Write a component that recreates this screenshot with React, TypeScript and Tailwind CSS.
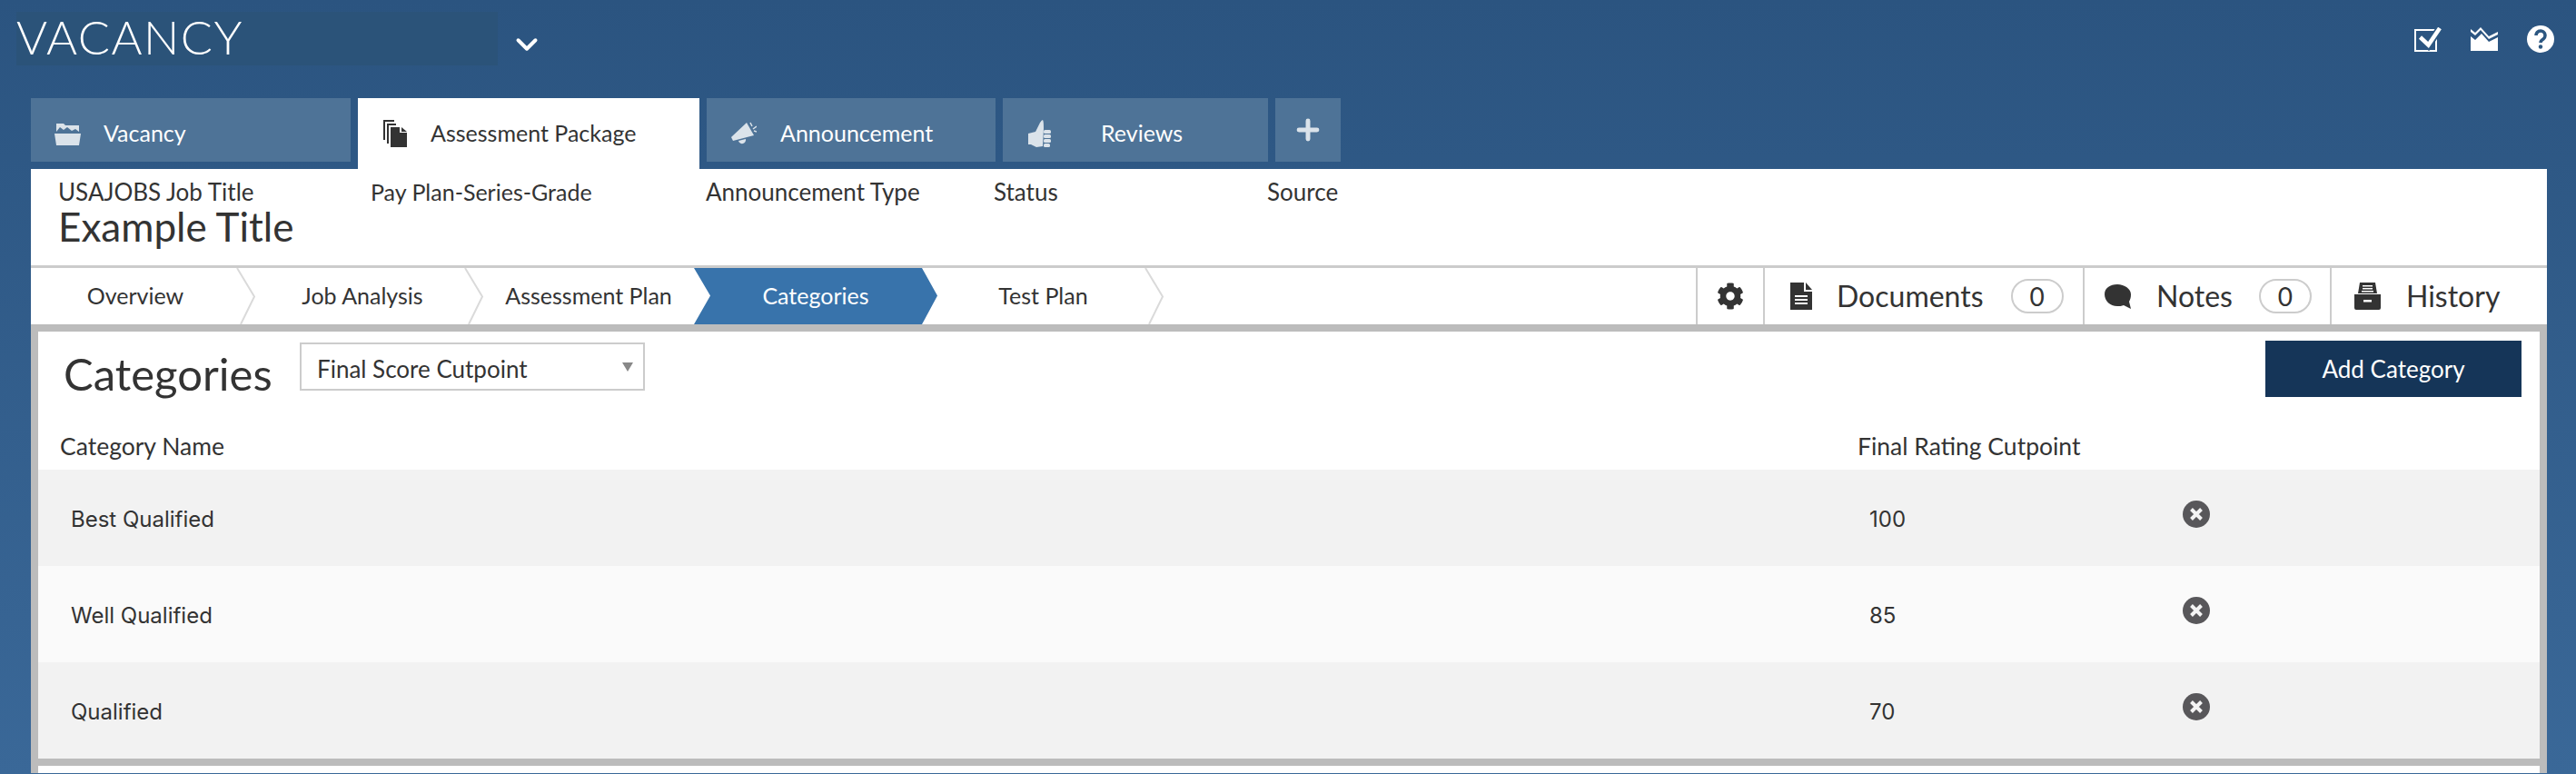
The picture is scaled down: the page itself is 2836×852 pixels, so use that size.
import React from 'react';
import { ChevronDown, Plus } from 'lucide-react';
import { FaCog } from 'react-icons/fa';

const ubuntu = { fontFamily: 'Lato' };

const FolderIcon = () => (
  <svg viewBox="0 0 29 25" className="w-[29px] h-[25px]" fill="currentColor">
    <path d="M2 1h8l2 2h15v7l-4-3-4 2-5-4-4 3-4-3-4 5z" />
    <path d="M0 12h29l-2 13H2z" />
  </svg>
);

const PagesIcon = () => (
  <svg viewBox="0 0 26 30" className="w-[26px] h-[30px]" fill="currentColor">
    <path d="M0 0h12v2H2v20H0z" />
    <path d="M4 4h10v2H6v20H4z" />
    <path d="M8 8h10v6h8v16H8z" />
    <path d="M20 8l6 5h-6z" />
  </svg>
);

const MegaphoneIcon = () => (
  <svg viewBox="0 0 28 27" className="w-[28px] h-[27px]" fill="currentColor">
    <path d="M0 17L17 1l8 14-23 6z" />
    <path d="M8 21l8-2a4 4 0 0 1-8 2z" />
    <path d="M21 1l2 4M24 8l4-3M25 10l3 1" stroke="currentColor" strokeWidth="1.500" />
  </svg>
);

const ThumbIcon = () => (
  <svg viewBox="0 0 25 30" className="w-[25px] h-[30px]" fill="currentColor">
    <path d="M0 15l8-2 5-10q2-3 3-3 1 1 1 9l-1 20-7 1-6-3H0z" />
    <rect x="17" y="11" width="8" height="4" rx="1.500" />
    <rect x="17" y="16" width="8" height="4" rx="1.500" />
    <rect x="17" y="21" width="8" height="4" rx="1.500" />
    <rect x="17" y="26" width="7" height="4" rx="1.500" />
  </svg>
);

const CheckBoxIcon = () => (
  <svg viewBox="0 0 30 27" className="w-[30px] h-[27px]" fill="none">
    <rect x="1" y="3" width="23" height="23" stroke="white" strokeWidth="2" />
    <path d="M6.500 11l9 9L28 1" stroke="#2c5781" strokeWidth="8" />
    <path d="M6.500 11l9 8.500L28 1" stroke="white" strokeWidth="4.500" />
  </svg>
);

const ChartIcon = () => (
  <svg viewBox="0 0 30 26" className="w-[30px] h-[26px]" fill="white">
    <path d="M0 2l5 4 6-6 9 10 10-5v3l-10 5-9-10-6 6-5-4z" />
    <path d="M0 10l5 4 7-7 8 9 10-5v15H0z" />
  </svg>
);

const HelpIcon = () => (
  <svg viewBox="0 0 30 30" className="w-[30px] h-[30px]">
    <circle cx="15" cy="15" r="15" fill="white" />
    <path d="M10 11a5 5 0 1 1 8 4c-2 1.300-3 2-3 4" fill="none" stroke="#2c5781" strokeWidth="3.500" />
    <circle cx="15" cy="23.500" r="2.200" fill="#2c5781" />
  </svg>
);

const DocIcon = () => (
  <svg viewBox="0 0 24 30" className="w-[24px] h-[30px]" fill="#333">
    <path fillRule="evenodd" d="M0 0h15v10h9v20H0zM5 14v2h14v-2zM5 18v2h14v-2zM5 22v2h14v-2z" />
    <path d="M17 0l7 8h-7z" />
  </svg>
);

const BubbleIcon = () => (
  <svg viewBox="0 0 30 27" className="w-[30px] h-[27px]" fill="#333">
    <path d="M14 0c8 0 15 5 15 11 0 4-1 6-2 8l2 8-8-4c-2 1-5 1-7 1C6 24 0 18 0 11S6 0 14 0z" />
  </svg>
);

const DrawerIcon = () => (
  <svg viewBox="0 0 29 30" className="w-[29px] h-[30px]" fill="#333">
    <path fillRule="evenodd" d="M6 0h17l2 12H4zM9 3v1.500h11V3zM9 6v1.500h11V6zM8 9v1.500h13V9z" />
    <path fillRule="evenodd" d="M0 13h29v15a2 2 0 0 1-2 2H2a2 2 0 0 1-2-2zM10 19v2.500h9V19z" />
  </svg>
);

const RemoveIcon = () => (
  <svg viewBox="0 0 30 30" className="w-[30px] h-[30px]">
    <circle cx="15" cy="15" r="15" fill="#58575a" />
    <path d="M9.500 9.500l11 11M20.500 9.500l-11 11" stroke="#f4f4f4" strokeWidth="4" />
  </svg>
);

const Tab = ({ icon, label, active, width, iconGap, labelGap }: { icon: React.ReactNode; label: string; active?: boolean; width: string; iconGap: string; labelGap: string }) => (
  <div className={`${width} flex items-center ${active ? 'h-[78px] bg-white text-[#333]' : 'h-[70px] bg-[#4e7397] text-white pt-[8px]'}`}>
    <div className={`${iconGap} w-[36px] flex justify-center ${active ? 'text-[#333]' : 'text-[#dbe3ea]'}`}>{icon}</div>
    <span className={`${labelGap} text-[25px]`}>{label}</span>
  </div>
);

const Step = ({ label, width, pad }: { label: string; width: string; pad?: string }) => (
  <div className={`${width} ${pad ?? ''} h-full flex items-center justify-center text-[25px] text-[#333]`}>
    {label}
  </div>
);

const Chevron = () => (
  <svg className="w-[21px] h-full shrink-0" viewBox="0 0 21 63" preserveAspectRatio="none" fill="none">
    <path d="M1 0l19 32L5 63" stroke="#dadada" strokeWidth="2" />
  </svg>
);

const Meta = ({ label, width, size = 'text-[26px]' }: { label: string; width: string; size?: string }) => (
  <div className={`${width} ${size} leading-[32px] text-[#333]`}>{label}</div>
);

const rows = [
  { name: 'Best Qualified', score: '100', bg: 'bg-[#f2f2f2]' },
  { name: 'Well Qualified', score: '85', bg: 'bg-[#fafafa]' },
  { name: 'Qualified', score: '70', bg: 'bg-[#f2f2f2]' },
];

export default function App() {
  return (
    <div className="w-[2836px] h-[852px] overflow-hidden bg-gradient-to-b from-[#2b5480] to-[#3a6898]" style={ubuntu}>
      <div className="h-[108px] flex items-start">
        <div className="mt-[13px] ml-[18px] w-[530px] h-[59px] bg-[#2b5379] flex items-center text-white text-[52px] font-light tracking-[1.500px] leading-none pb-[6px]">VACANCY</div>
        <ChevronDown className="mt-[30px] ml-[13px] w-[38px] h-[38px] text-white" strokeWidth={2.500} />
        <div className="ml-auto mr-[24px] mt-[28px] flex items-center gap-[32px]">
          <CheckBoxIcon />
          <ChartIcon />
          <HelpIcon />
        </div>
      </div>

      <div className="ml-[34px] flex items-start gap-[8px] h-[78px]">
        <Tab width="w-[352px]" icon={<FolderIcon />} label="Vacancy" iconGap="ml-[22px]" labelGap="ml-[22px]" />
        <Tab width="w-[376px]" icon={<PagesIcon />} label="Assessment Package" iconGap="ml-[23px]" labelGap="ml-[21px]" active />
        <Tab width="w-[318px]" icon={<MegaphoneIcon />} label="Announcement" iconGap="ml-[23px]" labelGap="ml-[22px]" />
        <Tab width="w-[292px]" icon={<ThumbIcon />} label="Reviews" iconGap="ml-[22px]" labelGap="ml-[50px]" />
        <div className="w-[72px] h-[70px] bg-[#4e7397] flex items-center justify-center text-[#dbe3ea]">
          <Plus className="w-[34px] h-[34px]" strokeWidth={3.500} />
        </div>
      </div>

      <div className="ml-[34px] w-[2770px] bg-white">
        <div className="h-[106px] pl-[30px] pt-[9px]">
          <div className="flex">
            <Meta width="w-[344px]" label="USAJOBS Job Title" />
            <Meta width="w-[369px]" size="text-[25px]" label="Pay Plan-Series-Grade" />
            <Meta width="w-[317px]" label="Announcement Type" />
            <Meta width="w-[301px]" label="Status" />
            <Meta width="w-[200px]" label="Source" />
          </div>
          <div className="text-[44px] leading-[44px] text-[#333]">Example Title</div>
        </div>

        <div className="h-[73px] border-t-[3px] border-[#ccc] border-b-[8px] border-b-[#bcbcbc] flex">
          <div className="flex items-center h-full">
            <Step width="w-[226px]" pad="pl-[4px]" label="Overview" />
            <Chevron />
            <Step width="w-[230px]" pad="pl-[6px]" label="Job Analysis" />
            <Chevron />
            <Step width="w-[232px]" label="Assessment Plan" />
            <div className="w-[268px] h-full relative flex items-center justify-center text-[25px] text-white">
              <svg className="absolute left-0 top-0 w-full h-full" viewBox="0 0 268 63" preserveAspectRatio="none">
                <path d="M0 0h251l17 31-17 32H0l18-32z" fill="#3873ab" />
              </svg>
              <span className="relative">Categories</span>
            </div>
            <Step width="w-[228px]" pad="pl-[5px]" label="Test Plan" />
            <Chevron />
          </div>
          <div className="ml-auto flex h-full text-[32px] text-[#333]">
            <div className="w-[74px] border-l-2 border-[#ccc] flex items-center justify-center">
              <FaCog className="w-[30px] h-[30px] text-[#333]" />
            </div>
            <div className="w-[352px] border-l-2 border-[#ccc] flex items-center pl-[28px]">
              <DocIcon />
              <span className="ml-[27px]">Documents</span>
              <span className="ml-[30px] w-[58px] h-[38px] rounded-full border-2 border-[#ccc] flex items-center justify-center text-[28px]">0</span>
            </div>
            <div className="w-[272px] border-l-2 border-[#ccc] flex items-center pl-[22px]">
              <BubbleIcon />
              <span className="ml-[27px]">Notes</span>
              <span className="ml-[29px] w-[58px] h-[38px] rounded-full border-2 border-[#ccc] flex items-center justify-center text-[28px]">0</span>
            </div>
            <div className="w-[239px] border-l-2 border-[#ccc] flex items-center pl-[25px]">
              <DrawerIcon />
              <span className="ml-[28px]">History</span>
            </div>
          </div>
        </div>

        <div className="border-x-[8px] border-[#bcbcbc] h-[486px]">
          <div className="h-[152px] relative text-[#333]">
            <div className="flex items-start pt-[12px]">
              <div className="ml-[28px] w-[260px] mt-[5px] text-[49px] leading-[58px]">Categories</div>
              <div className="w-[380px] h-[53px] border-2 border-[#ccc] bg-white flex items-center pl-[17px] pt-[5px] text-[26px]">
                Final Score Cutpoint
                <span className="ml-auto mr-[11px] -mt-[5px] w-0 h-0 border-x-[6px] border-x-transparent border-t-[10px] border-t-[#888]" />
              </div>
              <button className="ml-auto mr-[20px] -mt-[2px] w-[282px] h-[62px] bg-[#153558] text-white text-[26px]">Add Category</button>
            </div>
            <div className="absolute left-[24px] top-[107px] text-[26.500px]">Category Name</div>
            <div className="absolute left-[2003px] top-[107px] text-[26.500px]">Final Rating Cutpoint</div>
          </div>
          {rows.map((row) => (
            <div key={row.name} className={`${row.bg} h-[106px] flex items-center pt-[4px] text-[24px] text-[#333]`} style={{ fontFamily: 'Inter' }}>
              <div className="ml-[36px] w-[1980px]">{row.name}</div>
              <div className="w-[345px]">{row.score}</div>
              <div className="-mt-[12px]"><RemoveIcon /></div>
            </div>
          ))}
          <div className="h-[8px] bg-[#bcbcbc]" />
        </div>
      </div>
    </div>
  );
}
